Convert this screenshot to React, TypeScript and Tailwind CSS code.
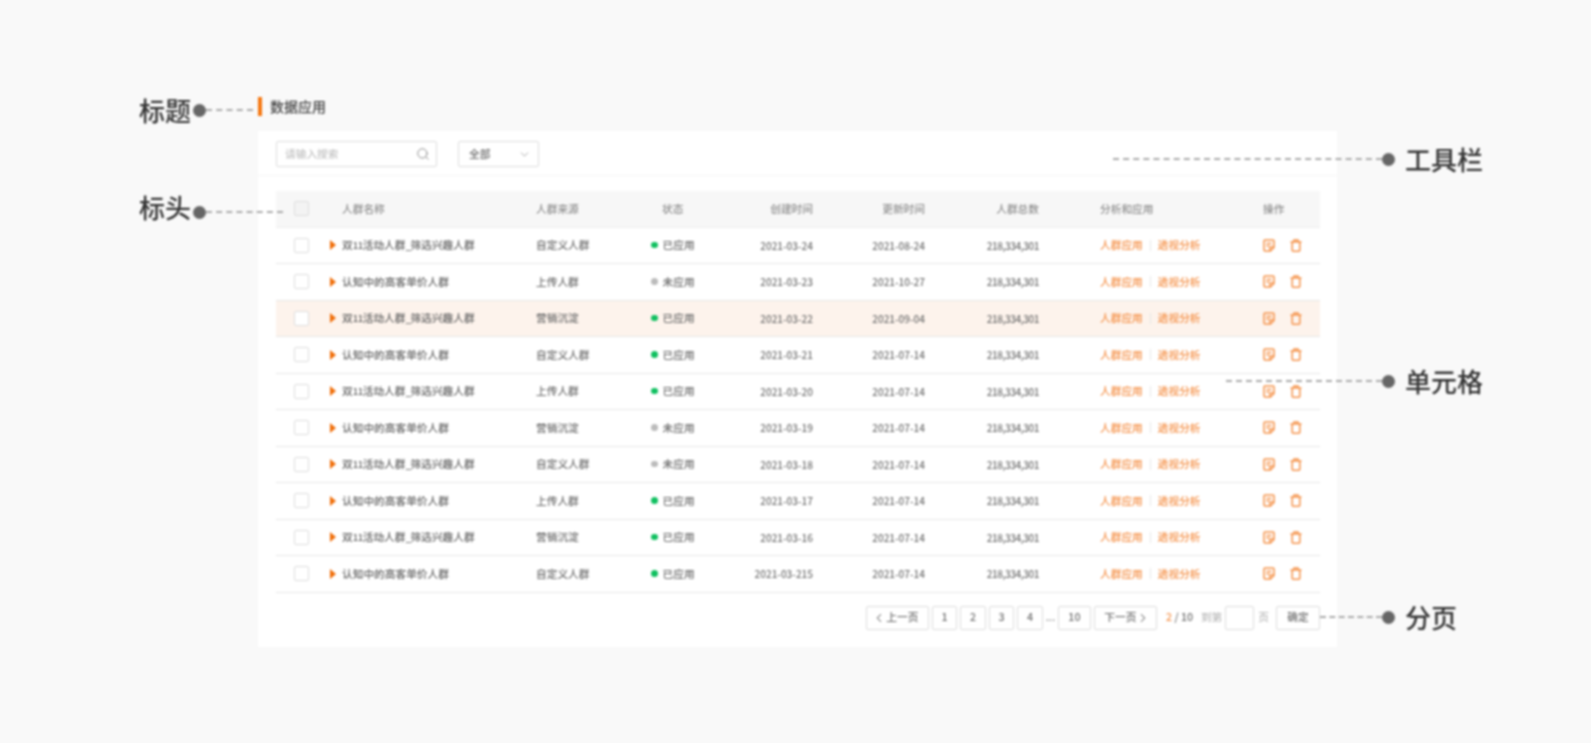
import React from "react";
import { ChevronDown, ChevronLeft, ChevronRight, Search } from "lucide-react";

const font = { fontFamily: '"Noto Sans CJK SC", "Liberation Sans", sans-serif' };

const NAME_A = (
  <>
    双<span className="text-[9.5px] tracking-[-0.4px]">11</span>活动人群<span className="tracking-[-1px]">_</span>筛选兴趣人群
  </>
);
const NAME_B = "认知中的高客单价人群";

const rows = [
  { name: NAME_A, source: "自定义人群", on: true, created: "2021-03-24", updated: "2021-08-24" },
  { name: NAME_B, source: "上传人群", on: false, created: "2021-03-23", updated: "2021-10-27" },
  { name: NAME_A, source: "营销沉淀", on: true, created: "2021-03-22", updated: "2021-09-04", active: true },
  { name: NAME_B, source: "自定义人群", on: true, created: "2021-03-21", updated: "2021-07-14" },
  { name: NAME_A, source: "上传人群", on: true, created: "2021-03-20", updated: "2021-07-14" },
  { name: NAME_B, source: "营销沉淀", on: false, created: "2021-03-19", updated: "2021-07-14" },
  { name: NAME_A, source: "自定义人群", on: false, created: "2021-03-18", updated: "2021-07-14" },
  { name: NAME_B, source: "上传人群", on: true, created: "2021-03-17", updated: "2021-07-14" },
  { name: NAME_A, source: "营销沉淀", on: true, created: "2021-03-16", updated: "2021-07-14" },
  { name: NAME_B, source: "自定义人群", on: true, created: "2021-03-215", updated: "2021-07-14" },
];

const Checkbox = ({ muted }: { muted?: boolean }) => (
  <div className="w-[54px] shrink-0 pl-[18px]">
    <div className={`w-[15px] h-[15px] rounded-[2px] border border-[#dddddd] ${muted ? "bg-[#f3f3f3]" : "bg-white"}`} />
  </div>
);

const NoteIcon = () => (
  <svg width="12" height="13" viewBox="0 0 12 13" fill="none" stroke="#f5924a" strokeWidth="1.5">
    <path d="M1 2a1 1 0 0 1 1-1h8a1 1 0 0 1 1 1v6.5L7.5 12H2a1 1 0 0 1-1-1z" />
    <path d="M3.5 4.5h5M3.5 7h2.5M7 12V8h4" />
  </svg>
);

const TrashIcon = () => (
  <svg width="12" height="13" viewBox="0 0 12 13" fill="none" stroke="#f5924a" strokeWidth="1.5">
    <path d="M.5 3h11M4 3V1h4v2M2.2 3v8.2a1 1 0 0 0 1 1h5.6a1 1 0 0 0 1-1V3" />
  </svg>
);

const PageBtn = ({ children, className = "w-[25.5px]" }: { children: React.ReactNode; className?: string }) => (
  <div className={`h-[24px] flex items-center justify-center rounded-[2px] border border-[#dddddd] bg-white text-[#707070] ${className}`}>
    {children}
  </div>
);

const Callout = ({ label, className, line, labelClass = "", reverse }: { label: string; className: string; line: string; labelClass?: string; reverse?: boolean }) => (
  <div className={`absolute flex items-center ${reverse ? "flex-row-reverse" : ""} ${className}`}>
    <span className={`text-[26px] leading-[32px] font-medium text-[#333] whitespace-nowrap ${labelClass}`}>{label}</span>
    <span className={`w-[13px] h-[13px] rounded-full bg-[#666] shrink-0 ${reverse ? "mr-[10px]" : "ml-[2px]"}`} />
    <span className={`h-0 border-t-2 border-dashed border-[#aaa] shrink-0 ${line}`} />
  </div>
);

export default function App() {
  return (
    <div className="w-[1591px] h-[743px] overflow-hidden bg-[#f9f9f9]" style={font}>
      <div className="relative w-[1591px] h-[743px] blur-[0.8px]">
        <div className="ml-[258px] w-[1079px] pt-[97px]">
          <div className="flex items-center h-[19px] gap-[8px]">
            <div className="w-[4px] h-[19px] bg-[#f5760f]" />
            <span className="text-[14px] font-medium text-[#444]">数据应用</span>
          </div>

          <div className="mt-[15px] h-[516px] bg-white text-[10.7px] text-[#707070] font-medium">
            <div className="h-[45px] flex items-start pl-[18px] pt-[10px] gap-[21px] border-b border-[#f5f5f5]">
              <div className="w-[161px] h-[26px] flex items-center justify-between pl-[8px] pr-[6px] rounded-[2px] border border-[#dddddd]">
                <span className="text-[#c4c4c4]">请输入搜索</span>
                <Search size={14} strokeWidth={1.6} color="#888" />
              </div>
              <div className="w-[81px] h-[26px] flex items-center justify-between pl-[10px] pr-[7px] rounded-[2px] border border-[#dddddd]">
                <span>全部</span>
                <ChevronDown size={13} strokeWidth={1.5} color="#999" />
              </div>
            </div>

            <div className="mx-[18px] mt-[15px] w-[1044px]">
              <div className="h-[36.5px] flex items-center bg-[#f7f7f7] text-[#909090] border-b border-[#eeeeee]">
                <Checkbox muted />
                <div className="w-[206px] shrink-0 pl-[12px]">人群名称</div>
                <div className="w-[115px] shrink-0">人群来源</div>
                <div className="w-[69px] shrink-0 pl-[11px]">状态</div>
                <div className="w-[93px] shrink-0 text-right">创建时间</div>
                <div className="w-[112px] shrink-0 text-right">更新时间</div>
                <div className="w-[114px] shrink-0 text-right">人群总数</div>
                <div className="w-[61px] shrink-0" />
                <div className="w-[163px] shrink-0">分析和应用</div>
                <div>操作</div>
              </div>

              {rows.map((row, i) => (
                <div
                  key={i}
                  className={`h-[36.5px] flex items-center border-b border-[#e6e6e6] ${row.active ? "bg-[#fdf3ec]" : ""}`}
                >
                  <Checkbox />
                  <div className="w-[206px] shrink-0 flex items-center">
                    <div className="w-0 h-0 border-y-[5px] border-y-transparent border-l-[6px] border-l-[#f06e0a]" />
                    <span className="ml-[6px] text-[#666]">{row.name}</span>
                  </div>
                  <div className="w-[115px] shrink-0">{row.source}</div>
                  <div className="w-[69px] shrink-0 flex items-center">
                    <span className={`w-[6.5px] h-[6.5px] rounded-full ${row.on ? "bg-[#10c060]" : "bg-[#bbbbbb]"}`} />
                    <span className="ml-[5px]">{row.on ? "已应用" : "未应用"}</span>
                  </div>
                  <div className="w-[93px] shrink-0 text-right text-[10px]">{row.created}</div>
                  <div className="w-[112px] shrink-0 text-right text-[10px]">{row.updated}</div>
                  <div className="w-[114px] shrink-0 text-right text-[10px] tracking-[-0.45px]">218,334,301</div>
                  <div className="w-[61px] shrink-0" />
                  <div className="w-[163px] shrink-0 flex items-center text-[#f5924a]">
                    <span>人群应用</span>
                    <span className="w-px h-[11px] bg-[#e6e6e6] mx-[7px]" />
                    <span>透视分析</span>
                  </div>
                  <div className="flex items-center gap-[15px]">
                    <NoteIcon />
                    <TrashIcon />
                  </div>
                </div>
              ))}

              <div className="mt-[13px] flex items-center justify-end">
                <PageBtn className="w-[63px] mr-[3px]">
                  <ChevronLeft size={14} strokeWidth={1.8} className="-ml-[4px]" />
                  上一页
                </PageBtn>
                <div className="flex items-center gap-[3px]">
                  <PageBtn>1</PageBtn>
                  <PageBtn>2</PageBtn>
                  <PageBtn>3</PageBtn>
                  <PageBtn>4</PageBtn>
                </div>
                <span className="w-[15px] text-center text-[#999]">...</span>
                <PageBtn className="w-[33px] mr-[3px]">10</PageBtn>
                <PageBtn className="w-[63px]">
                  下一页
                  <ChevronRight size={14} strokeWidth={1.8} className="-mr-[4px]" />
                </PageBtn>
                <span className="ml-[9px] w-[26px] whitespace-nowrap">
                  <span className="text-[#f5924a]">2</span> / 10
                </span>
                <span className="ml-[9px] text-[#bbb]">到第</span>
                <div className="ml-[3px] w-[29px] h-[24px] rounded-[2px] border border-[#dddddd]" />
                <span className="ml-[4px] text-[#bbb]">页</span>
                <PageBtn className="w-[44px] ml-[7px]">确定</PageBtn>
              </div>
            </div>
          </div>
        </div>

        <Callout label="标题" className="left-[139px] top-[94px]" line="w-[47px]" />
        <Callout label="标头" className="left-[139px] top-[196px]" line="w-[77px]" labelClass="-translate-y-[5px]" />
        <Callout label="工具栏" className="right-[108px] top-[143px]" line="w-[269px]" reverse />
        <Callout label="单元格" className="right-[108px] top-[365px]" line="w-[156px]" reverse />
        <Callout label="分页" className="right-[134px] top-[601px]" line="w-[62px]" reverse />
      </div>
    </div>
  );
}
